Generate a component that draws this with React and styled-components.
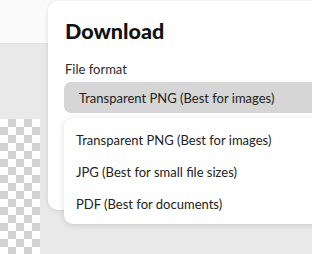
import React from 'react';
import styled, { createGlobalStyle } from 'styled-components';

const GlobalStyle = createGlobalStyle`
  html, body {
    margin: 0;
    padding: 0;
  }
  body {
    font-family: Lato, "Noto Sans", sans-serif;
    color: #222;
  }
`;

const Screen = styled.div`
  position: relative;
  width: 312px;
  height: 254px;
  overflow: hidden;
  display: flex;
  flex-direction: column;
  background: #e9e9e9;
`;

const TopBar = styled.div`
  height: 43px;
  flex-shrink: 0;
  background: #fafafa;
  border-bottom: 1px solid #e4e4e4;
`;

const Workspace = styled.div`
  flex: 1;
  display: flex;
  padding-top: 75px;
`;

const Canvas = styled.div`
  width: 40px;
  background-color: #fff;
  background-image: conic-gradient(
    #d2d2d2 0 25%,
    #fff 0 50%,
    #d2d2d2 0 75%,
    #fff 0
  );
  background-size: 16px 16px;
`;

const Panel = styled.div`
  position: absolute;
  left: 48px;
  top: 1px;
  width: 300px;
  height: 209px;
  box-sizing: border-box;
  padding: 17px 0 0 17px;
  background: #fff;
  border-radius: 10px;
  box-shadow: 0 1px 5px rgba(0, 0, 0, 0.12);
`;

const Title = styled.h2`
  margin: 0;
  font-size: 21.5px;
  line-height: 27px;
  font-weight: 900;
  color: #111;
`;

const Label = styled.div`
  margin-top: 16px;
  font-size: 13px;
  line-height: 16px;
  color: #2c2c2c;
`;

const Select = styled.div`
  margin: 5px 0 0 -1px;
  height: 31px;
  display: flex;
  align-items: center;
  padding-left: 15px;
  border-radius: 7px;
  background: #d6d6d6;
  font-size: 13px;
  color: #222;
`;

const Menu = styled.ul`
  position: absolute;
  left: 64px;
  top: 118px;
  width: 280px;
  margin: 0;
  padding: 6px 0 4px;
  list-style: none;
  background: #fff;
  border-radius: 9px;
  box-shadow: 0 1px 6px rgba(0, 0, 0, 0.14);
`;

const Item = styled.li`
  height: 32px;
  display: flex;
  align-items: center;
  padding-left: 12px;
  font-size: 13px;
  color: #222;
`;

const formats = [
  'Transparent PNG (Best for images)',
  'JPG (Best for small file sizes)',
  'PDF (Best for documents)',
];

export default function App() {
  return (
    <>
      <GlobalStyle />
      <Screen>
        <TopBar />
        <Workspace>
          <Canvas />
        </Workspace>
        <Panel>
          <Title>Download</Title>
          <Label>File format</Label>
          <Select>{formats[0]}</Select>
        </Panel>
        <Menu>
          {formats.map((f) => (
            <Item key={f}>{f}</Item>
          ))}
        </Menu>
      </Screen>
    </>
  );
}
